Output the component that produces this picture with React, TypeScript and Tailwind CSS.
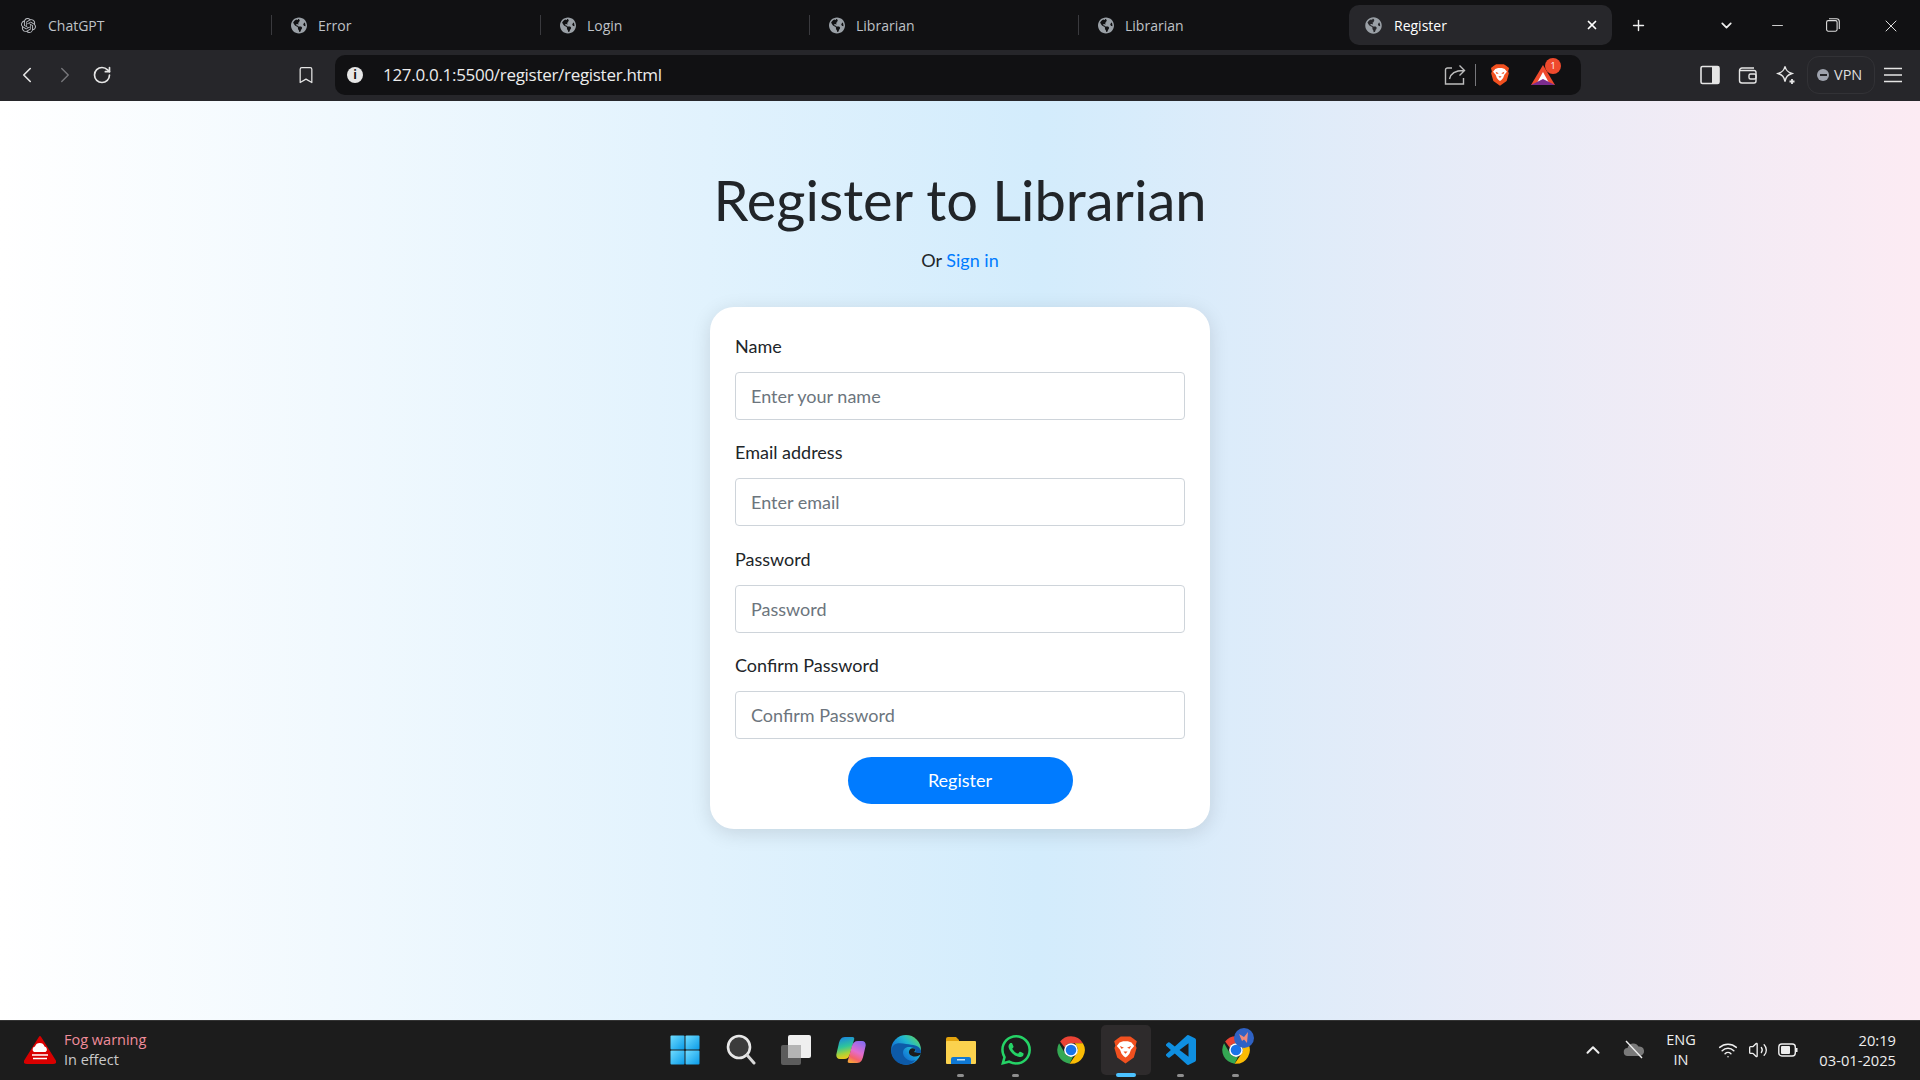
import React from "react";
import { FaGlobeAmericas } from "react-icons/fa";
import { SiOpenai, SiWhatsapp } from "react-icons/si";
import { ChevronLeft, ChevronRight, RotateCw, Bookmark, Plus, X, ChevronDown, Minus, ChevronUp, Wifi, Volume2 } from "lucide-react";

const ui = "font-['Open_Sans','Noto_Sans',sans-serif]";
const body = "font-['Lato','Noto_Sans',sans-serif]";

function Tab({ title, first, last }: { title: string; first?: boolean; last?: boolean }) {
  return (
    <div className={`${first ? "w-[272px]" : "w-[269px]"} h-[40px] flex items-center relative shrink-0`}>
      <div className={`${first ? "ml-[20px]" : "ml-[19px]"} w-[16px] flex justify-center`}>
        {first ? <SiOpenai size={15} color="#b9bcc1" /> : <FaGlobeAmericas size={17} color="#9aa0a6" />}
      </div>
      <span className={`${first ? "ml-[12px]" : "ml-[11px]"} text-[14px] text-[#bfc2c7]`}>{title}</span>
      {!last && <div className="absolute right-0 top-[10px] h-[20px] w-px bg-[#3a3a3e]" />}
    </div>
  );
}

function Field({ label, placeholder }: { label: string; placeholder: string }) {
  return (
    <div className="mb-[21.4px]">
      <label className="block h-[24px] leading-[23px] text-[18px] text-[#212529]">{label}</label>
      <input
        placeholder={placeholder}
        readOnly
        className={`mt-[13px] block w-full h-[48px] rounded-[4px] border border-[#ced4da] bg-white px-[15px] text-[18px] placeholder:text-[#6c757d] ${body}`}
      />
    </div>
  );
}

function Chrome({ size = 28 }: { size?: number }) {
  return (
    <svg width={size} height={size} viewBox="0 0 48 48">
      <path d="M24 2a22 22 0 0 1 19.05 11H24a11 11 0 0 0-10.2 6.9L6.6 10.3A22 22 0 0 1 24 2z" fill="#ea4335" />
      <path d="M4.9 13 L15 30.5 A11 11 0 0 0 27.5 34.4 L21.8 45.9 A22 22 0 0 1 4.9 13z" fill="#34a853" />
      <path d="M43.1 13A22 22 0 0 1 24 46h-2.2L33 29.5A11 11 0 0 0 33 17.5L30 13z" fill="#fbbc04" />
      <circle cx="24" cy="24" r="11" fill="#fff" />
      <circle cx="24" cy="24" r="8.5" fill="#1a73e8" />
    </svg>
  );
}

function Brave({ w, h }: { w: number; h: number }) {
  return (
    <svg width={w} height={h} viewBox="1.500 0.500 21 23.500">
      <path d="M5.500 2.500L8 1h8l2.500 1.500L21.500 5l-1 3.500.8 2L19 18.500 12 23.500l-7-5-2.300-8 .8-2L2.500 5z" fill="#f1501f" />
      <path d="M7 6l3-1.200h4L17 6l2.300 2.800L16.600 12 15.300 15.500 13.500 17.500 12 18.500l-1.500-1-1.800-2L7.400 12 4.700 8.800z" fill="#fff" />
      <path d="M7.300 8.800l3.400 1.500-2.200 1zM16.700 8.800l-3.400 1.500 2.200 1zM10.300 13.600h3.400L12 15.500z" fill="#f1501f" />
    </svg>
  );
}

function Slot({ children, dot, active }: { children: React.ReactNode; dot?: boolean; active?: boolean }) {
  return (
    <div className="relative w-[55px] h-[60px] flex items-center justify-center shrink-0">
      {active && <div className="absolute left-[3px] top-[5px] w-[50px] h-[50px] rounded-[5px] bg-[#2e2b2c]" />}
      <div className="relative flex items-center justify-center">{children}</div>
      {dot && <div className="absolute left-[24px] bottom-[3px] w-[7px] h-[3px] rounded-full bg-[#8e8e8e]" />}
      {active && <div className="absolute left-[18px] bottom-[3px] w-[20px] h-[4px] rounded-full bg-[#4cc2ff]" />}
    </div>
  );
}

export default function App() {
  return (
    <div className="w-[1920px] h-[1080px] overflow-hidden flex flex-col">
      {/* tab strip */}
      <div className={`h-[50px] shrink-0 bg-[#111113] flex items-start pt-[5px] ${ui}`}>
        <Tab title="ChatGPT" first />
        <Tab title="Error" />
        <Tab title="Login" />
        <Tab title="Librarian" />
        <Tab title="Librarian" last />
        <div className="w-[263px] h-[40px] ml-[1px] rounded-[10px] bg-[#27272b] flex items-center shrink-0">
          <div className="ml-[16px]"><FaGlobeAmericas size={17} color="#9aa0a6" /></div>
          <span className="ml-[12px] text-[14px] text-white">Register</span>
          <X size={14} strokeWidth={3} color="#fff" className="ml-auto mr-[13px]" />
        </div>
        <div className="ml-[18px] mt-[12px]"><Plus size={17} color="#eee" strokeWidth={2} /></div>
        <div className="ml-[71px] mt-[12px]"><ChevronDown size={17} color="#eee" strokeWidth={2.4} /></div>
        <div className="ml-[34px] mt-[12px]"><Minus size={17} color="#ddd" strokeWidth={1.3} /></div>
        <div className="ml-[40px] mt-[13px]">
          <svg width="14" height="14" viewBox="0 0 14 14" fill="none" stroke="#ddd" strokeWidth="1.1">
            <rect x="0.6" y="2.6" width="10.5" height="10.6" rx="1.6" />
            <path d="M3 .7h7.500a2.800 2.800 0 0 1 2.800 2.800V11" />
          </svg>
        </div>
        <div className="ml-[41px] mt-[11px]"><X size={20} color="#ddd" strokeWidth={1.2} /></div>
      </div>

      {/* toolbar */}
      <div className={`h-[51px] shrink-0 bg-[#26262a] flex items-center pb-[1px] ${ui}`}>
        <ChevronLeft size={26} strokeWidth={1.5} color="#e5e5e5" className="ml-[14px]" />
        <ChevronRight size={26} strokeWidth={1.3} color="#77777b" className="ml-[12px]" />
        <RotateCw size={20} strokeWidth={2} color="#e5e5e5" className="ml-[14px]" />
        <Bookmark size={20} strokeWidth={1.5} color="#e5e5e5" className="ml-[184px]" />
        <div className="ml-[19px] w-[1246px] h-[40px] rounded-[10px] bg-[#111113] flex items-center">
          <div className="ml-[12px] w-[16px] h-[16px] rounded-full bg-[#e6e6e6] text-[#111] text-[12px] font-bold flex items-center justify-center">i</div>
          <span className="ml-[20px] text-[17px] tracking-[-0.3px] text-[#ececec]">127.0.0.1:5500/register/register.html</span>
          <div className="ml-auto flex items-center">
            <svg width="22" height="22" viewBox="0 0 22 22" fill="none" stroke="#bdbdbd" strokeWidth="1.4">
              <path d="M8 4H3.500a2 2 0 0 0-2 2v14h18v-6" />
              <path d="M5.500 15c1-5 4.500-8.500 14-8.500M15.500 1.500l5 5-5 5" />
            </svg>
            <div className="ml-[9px] w-px h-[22px] bg-[#77777b]" />
            <div className="ml-[13px] w-[22px] flex justify-center"><Brave w={20} h={24} /></div>
            <div className="relative ml-[20px] mr-[26px] w-[24px] h-[24px]">
              <svg width="24" height="24" viewBox="0 0 24 24">
                <path d="M12 2 L24 22 H0z" fill="#ef4a2d" />
                <path d="M12 9 L17.500 19 H6.500z" fill="#fff" />
                <path d="M0 22 H24 L12 16z" fill="#7b2d8e" />
              </svg>
              <div className="absolute -top-[5px] left-[14px] w-[16px] h-[16px] rounded-full bg-[#ef4a2d] text-white text-[9px] flex items-center justify-center">1</div>
            </div>
          </div>
        </div>
        <svg width="20" height="20" viewBox="0 0 20 20" className="ml-[119px]">
          <rect x="1" y="1.500" width="18" height="17" rx="1.500" fill="none" stroke="#e5e5e5" strokeWidth="1.600" />
          <rect x="12" y="2" width="7" height="16" fill="#e5e5e5" />
        </svg>
        <svg width="20" height="20" viewBox="0 0 20 20" fill="none" stroke="#e5e5e5" strokeWidth="1.400" className="ml-[18px]">
          <path d="M16 3H4a2.500 2.500 0 0 0-2.500 2.500v10A2.500 2.500 0 0 0 4 18h12a2 2 0 0 0 2-2V7.500a2 2 0 0 0-2-2H2" />
          <rect x="11" y="9" width="7" height="5" rx="1.500" />
        </svg>
        <svg width="20" height="20" viewBox="0 0 20 20" fill="none" stroke="#e5e5e5" strokeWidth="1.400" className="ml-[18px]">
          <path d="M9 1.500c1 4 2.500 5.500 7 7-4.500 1.500-6 3-7 8-1-5-2.500-6.500-7-8 4.500-1.500 6-3 7-7z" />
          <path d="M16 14v5M13.500 16.500h5" strokeWidth="1.800" />
        </svg>
        <div className="ml-[11px] w-[68px] h-[38px] rounded-[12px] border border-[#323236] flex items-center">
          <div className="ml-[9px] w-[12px] h-[12px] rounded-full bg-[#9ea2ad] flex items-center justify-center"><div className="w-[7px] h-[2px] bg-[#26262a]" /></div>
          <span className="ml-[5px] text-[14.500px] text-[#dedede]">VPN</span>
        </div>
        <svg width="20" height="18" viewBox="0 0 20 18" stroke="#e5e5e5" strokeWidth="1.500" className="ml-[8px]">
          <path d="M1 2.500h18M1 9h18M1 15.500h18" />
        </svg>
      </div>

      {/* page */}
      <main className={`flex-1 flex flex-col items-center bg-[linear-gradient(90deg,#ffffff_0%,#d3ecfc_54%,#fcebf3_100%)] ${body}`}>
        <h1 className="mt-[64px] h-[70px] leading-[70px] text-[56px] font-normal text-[#212529]">Register to Librarian</h1>
        <p className="mt-[14px] h-[24px] leading-[23px] text-[18px] text-[#212529]">
          Or <a className="text-[#007bff]">Sign in</a>
        </p>
        <div className="mt-[34px] w-[500px] h-[522px] rounded-[24px] bg-white px-[25px] pt-[28px] shadow-[0_4px_20px_rgba(0,0,0,0.12)]">
          <Field label="Name" placeholder="Enter your name" />
          <Field label="Email address" placeholder="Enter email" />
          <Field label="Password" placeholder="Password" />
          <Field label="Confirm Password" placeholder="Confirm Password" />
          <div className="flex justify-center -mt-[4px]">
            <button className="w-[225px] h-[47px] rounded-full bg-[#007bff] text-white text-[18px]">Register</button>
          </div>
        </div>
      </main>

      {/* taskbar */}
      <div className={`h-[60px] shrink-0 bg-[#1c1c1c] border-t border-[#333] flex items-center pb-[2px] ${ui}`}>
        <div className="w-[657px] flex items-center shrink-0">
          <svg width="32" height="30" viewBox="0 0 32 30" className="ml-[24px]">
            <path d="M16 2 L31 26 Q32 28 29 28 H3 Q0 28 1 26z" fill="#d90000" stroke="#d90000" strokeWidth="2" strokeLinejoin="round" />
            <path d="M10 17a3 3 0 0 1 1-5.500 5 5 0 0 1 9.500 0 3 3 0 0 1 1 5.500z" fill="#fff" />
            <path d="M8 20h16M9 23.500h14" stroke="#fff" strokeWidth="1.500" />
          </svg>
          <div className="ml-[8px] text-[14.500px] leading-[20px]">
            <div className="text-[#f08c9b]">Fog warning</div>
            <div className="text-[#c9c9c9]">In effect</div>
          </div>
        </div>
        <div className="flex items-center">
          <Slot>
            <svg width="30" height="30" viewBox="0 0 30 30">
              <defs><linearGradient id="win" x1="0" y1="0" x2="1" y2="1"><stop offset="0" stopColor="#6fdcff" /><stop offset="1" stopColor="#0a9be8" /></linearGradient></defs>
              <rect x="0.500" y="0.500" width="14" height="14" rx="1" fill="url(#win)" />
              <rect x="15.500" y="0.500" width="14" height="14" rx="1" fill="url(#win)" />
              <rect x="0.500" y="15.500" width="14" height="14" rx="1" fill="url(#win)" />
              <rect x="15.500" y="15.500" width="14" height="14" rx="1" fill="url(#win)" />
            </svg>
          </Slot>
          <div className="ml-[1px]" />
          <Slot>
            <svg width="30" height="32" viewBox="0 0 30 32" fill="none">
              <circle cx="13" cy="13" r="11" fill="#3c3c3c" stroke="#e8e8e8" strokeWidth="2.600" />
              <path d="M21 21l7 8" stroke="#d8d8d8" strokeWidth="3" strokeLinecap="round" />
            </svg>
          </Slot>
          <Slot>
            <svg width="32" height="32" viewBox="0 0 32 32">
              <rect x="1" y="11" width="20" height="20" rx="2" fill="#5c5c5c" />
              <rect x="8" y="1" width="23" height="23" rx="2" fill="#efefef" />
              <rect x="8" y="11" width="13" height="13" fill="#b4b4b4" />
            </svg>
          </Slot>
          <Slot>
            <svg width="30" height="28" viewBox="0 0 30 28">
              <defs>
                <linearGradient id="cpa" x1="0.300" y1="0" x2="0.500" y2="1"><stop offset="0" stopColor="#1a86e0" /><stop offset="0.450" stopColor="#2fc59a" /><stop offset="0.750" stopColor="#a8d23a" /><stop offset="1" stopColor="#f5c518" /></linearGradient>
                <linearGradient id="cpb" x1="0.700" y1="0" x2="0.300" y2="1"><stop offset="0" stopColor="#8a6cf0" /><stop offset="0.500" stopColor="#e36ccd" /><stop offset="0.800" stopColor="#f5636a" /><stop offset="1" stopColor="#f7a03c" /></linearGradient>
              </defs>
              <path d="M9 1h7.500c1.500 0 2 1 1.700 2.300L14 18c-.8 3-2.500 5-6 5H4c-2.500 0-4-1.800-3.700-4.500L2.500 9C3.500 4 5 1 9 1z" fill="url(#cpa)" />
              <path d="M21 27h-7.500c-1.500 0-2-1-1.700-2.300L16 10c.8-3 2.500-5 6-5h4c2.500 0 4 1.800 3.700 4.500L27.500 19c-1 5-2.500 8-6.500 8z" fill="url(#cpb)" />
            </svg>
          </Slot>
          <Slot>
            <svg width="30" height="30" viewBox="0 0 30 30">
              <defs><linearGradient id="edge" x1="0.900" y1="0.100" x2="0.100" y2="0.900"><stop offset="0" stopColor="#58d26c" /><stop offset="0.300" stopColor="#20b8d0" /><stop offset="0.600" stopColor="#1583d8" /><stop offset="1" stopColor="#0d4f9a" /></linearGradient></defs>
              <circle cx="15" cy="15" r="15" fill="url(#edge)" />
              <path d="M0.500 15C2 7 9 8 15 9c7 1 13 1 15 6.500V18h-7c3-1 1.500-6-5-6-6 0-7.500 6-4.500 10 2.500 3.500 7 4.500 11 3C21 29 15 31 11 29 4 27 0 21 .5 15z" fill="#0d5aa8" />
              <path d="M30 18c-.5 2-3 3.500-6 3.500-4 0-6.500-2.500-6-5 .3-2 2-3.500 4-3.300 2.500.2 3 2.700 1 3.800 2 1 5.500 1 7 1z" fill="#1c1c1c" />
            </svg>
          </Slot>
          <Slot dot>
            <svg width="30" height="28" viewBox="0 0 30 28">
              <path d="M0 3a2 2 0 0 1 2-2h8l3 3v6H0z" fill="#e3a30d" />
              <rect x="0" y="5" width="30" height="23" rx="1" fill="#fbd24e" />
              <path d="M5 28v-5a2 2 0 0 1 2-2h16a2 2 0 0 1 2 2v5z" fill="#0f78d4" />
              <rect x="11" y="23" width="8" height="1.500" fill="#bfe0f7" />
            </svg>
          </Slot>
          <Slot dot><SiWhatsapp size={30} color="#25d366" /></Slot>
          <Slot><Chrome size={30} /></Slot>
          <Slot active><Brave w={25} h={28} /></Slot>
          <Slot dot>
            <svg width="30" height="30" viewBox="0 0 24 24">
              <path d="M23.150 2.587L18.210.21a1.494 1.494 0 0 0-1.705.29l-9.460 8.630-4.120-3.128a.999.999 0 0 0-1.276.057L.327 7.261A1 1 0 0 0 .326 8.740L3.899 12 .326 15.260a1 1 0 0 0 .001 1.479L1.650 17.940a.999.999 0 0 0 1.276.057l4.120-3.128 9.460 8.630a1.492 1.492 0 0 0 1.704.29l4.942-2.377A1.500 1.500 0 0 0 24 20.060V3.939a1.500 1.500 0 0 0-.850-1.352zm-5.146 14.861L10.826 12l7.178-5.448v10.896z" fill="#0f8fe0" />
            </svg>
          </Slot>
          <Slot dot>
            <div className="relative">
              <Chrome size={30} />
              <div className="absolute -top-[7px] left-[13px] w-[20px] h-[20px] rounded-full bg-[#2f62c4] flex items-center justify-center">
                <svg width="14" height="14" viewBox="0 0 14 14"><path d="M2 3 L7 6 L11 1 L10 12 L7 8.500 L5 10z" fill="#ef8a7a" /></svg>
              </div>
            </div>
          </Slot>
        </div>
        <ChevronUp size={22} strokeWidth={2.2} color="#eee" className="ml-[319px]" />
        <svg width="22" height="20" viewBox="0 0 22 20" className="ml-[19px]">
          <path d="M5 16a4 4 0 0 1-.500-8 6 6 0 0 1 11-1.500A4.500 4.500 0 0 1 17 16z" fill="#7a7a7a" />
          <path d="M3 1l16 17" stroke="#eee" strokeWidth="1.400" />
        </svg>
        <div className="ml-[16px] w-[40px] text-center text-[14.500px] leading-[20px] text-[#eee]">
          <div>ENG</div>
          <div>IN</div>
        </div>
        <Wifi size={20} strokeWidth={1.8} color="#eee" className="ml-[17px]" />
        <Volume2 size={20} strokeWidth={1.6} color="#eee" className="ml-[10px]" />
        <svg width="20" height="14" viewBox="0 0 20 14" className="ml-[10px]">
          <rect x="0.800" y="1" width="16.500" height="12" rx="3" fill="none" stroke="#eee" strokeWidth="1.400" />
          <rect x="3" y="3" width="9" height="8" rx="1" fill="#eee" />
          <rect x="18" y="5" width="1.500" height="4" fill="#eee" />
        </svg>
        <div className="ml-auto mr-[24px] text-right text-[14.700px] leading-[20px] text-[#eee]">
          <div>20:19</div>
          <div>03-01-2025</div>
        </div>
      </div>
    </div>
  );
}
